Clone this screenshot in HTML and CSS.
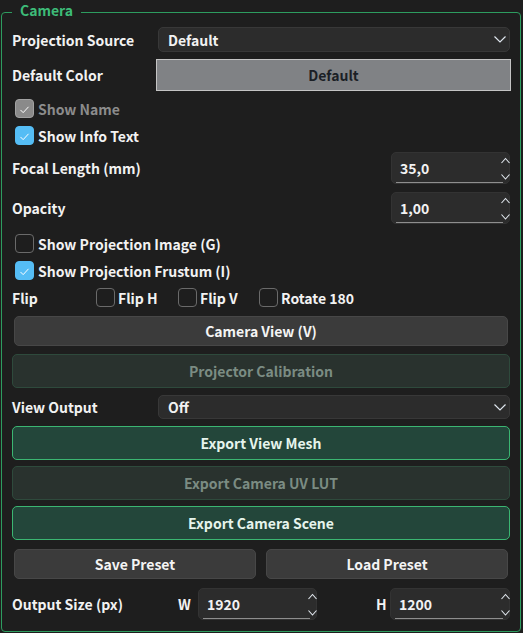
FILE: index.html
```html
<!DOCTYPE html>
<html lang="en">
<head>
  <meta charset="UTF-8" />
  <meta name="viewport" content="width=device-width, initial-scale=1.0" />
  <title>Camera</title>
  <link rel="stylesheet" href="styles.css">
</head>
<body>
  <fieldset class="group">
    <legend>Camera</legend>

    <div class="row combo-row">
      <span class="label">Projection Source</span>
      <div class="combo">
        <span>Default</span>
        <svg width="12" height="7" viewBox="0 0 12 7"><path d="M0.5 0.5 L6 6 L11.5 0.5" fill="none" stroke="#dfe6ee" stroke-width="1.2"/></svg>
      </div>
    </div>

    <div class="row color-row">
      <span class="label">Default Color</span>
      <button class="color-btn">Default</button>
    </div>

    <label class="check disabled checked first">
      <span class="box"><svg width="19" height="19" viewBox="0 0 19 19"><path d="M5 10 L8 13 L14 6.5" fill="none" stroke="#fff" stroke-width="1.1"/></svg></span>
      Show Name
    </label>
    <label class="check checked">
      <span class="box"><svg width="19" height="19" viewBox="0 0 19 19"><path d="M5 10 L8 13 L14 6.5" fill="none" stroke="#fff" stroke-width="1.1"/></svg></span>
      Show Info Text
    </label>

    <div class="row spin-row focal">
      <span class="label">Focal Length (mm)</span>
      <div class="spin">
        <span>35,0</span>
        <svg width="9" height="32" viewBox="0 0 9 32"><path d="M0.5 11 L4.5 6.5 L8.5 11 M0.5 22.5 L4.5 27 L8.5 22.5" fill="none" stroke="#e2e8ef" stroke-width="1.1"/></svg>
      </div>
    </div>

    <div class="row spin-row opacity">
      <span class="label">Opacity</span>
      <div class="spin">
        <span>1,00</span>
        <svg width="9" height="32" viewBox="0 0 9 32"><path d="M0.5 11 L4.5 6.5 L8.5 11 M0.5 22.5 L4.5 27 L8.5 22.5" fill="none" stroke="#e2e8ef" stroke-width="1.1"/></svg>
      </div>
    </div>

    <label class="check gap-top">
      <span class="box"></span>
      Show Projection Image (G)
    </label>
    <label class="check checked">
      <span class="box"><svg width="19" height="19" viewBox="0 0 19 19"><path d="M5 10 L8 13 L14 6.5" fill="none" stroke="#fff" stroke-width="1.1"/></svg></span>
      Show Projection Frustum (I)
    </label>

    <div class="row flip-row">
      <span class="label">Flip</span>
      <label class="check inline"><span class="box"></span>Flip H</label>
      <label class="check inline"><span class="box"></span>Flip V</label>
      <label class="check inline"><span class="box"></span>Rotate 180</label>
    </div>

    <button class="btn plain camera-view">Camera View (V)</button>
    <button class="btn disabled-btn calib">Projector Calibration</button>

    <div class="row combo-row view-output">
      <span class="label">View Output</span>
      <div class="combo small">
        <span>Off</span>
        <svg width="12" height="7" viewBox="0 0 12 7"><path d="M0.5 0.5 L6 6 L11.5 0.5" fill="none" stroke="#dfe6ee" stroke-width="1.2"/></svg>
      </div>
    </div>

    <button class="btn green export-mesh">Export View Mesh</button>
    <button class="btn disabled-btn export-lut">Export Camera UV LUT</button>
    <button class="btn green export-scene">Export Camera Scene</button>

    <div class="presets">
      <button class="btn plain">Save Preset</button>
      <button class="btn plain">Load Preset</button>
    </div>

    <div class="row size-row">
      <span class="label">Output Size (px)</span>
      <span class="label axis">W</span>
      <div class="spin">
        <span>1920</span>
        <svg width="9" height="32" viewBox="0 0 9 32"><path d="M0.5 11 L4.5 6.5 L8.5 11 M0.5 22.5 L4.5 27 L8.5 22.5" fill="none" stroke="#e2e8ef" stroke-width="1.1"/></svg>
      </div>
      <span></span>
      <span class="label axis">H</span>
      <div class="spin">
        <span>1200</span>
        <svg width="9" height="32" viewBox="0 0 9 32"><path d="M0.5 11 L4.5 6.5 L8.5 11 M0.5 22.5 L4.5 27 L8.5 22.5" fill="none" stroke="#e2e8ef" stroke-width="1.1"/></svg>
      </div>
    </div>
  </fieldset>
</body>
</html>
```

FILE: styles.css
```css
* { box-sizing: border-box; }
body { margin: 0; padding: 2px 2px 0 1px; background: #1e1e1e; color: #f2f2f2; font-family: "Noto Sans CJK KR", "Noto Sans", sans-serif; font-size: 14px; font-weight: 700; }

.group { margin: 0; width: 520px; height: 630px; border: 1px solid #2d9c5f; border-radius: 4px; padding: 5px 10px 0 10px; display: flex; flex-direction: column; }
.group legend { margin-left: 0; padding: 0 8px 4px 8px; color: #3dbb78; line-height: 16px; font-size: 14px; }

.row { display: flex; align-items: center; }
.label { white-space: nowrap; line-height: 20px; }

.combo-row { height: 25px; }
.combo-row .label { width: 146px; flex: none; }
.combo { flex: 1; height: 25px; display: flex; align-items: center; justify-content: space-between; padding: 0 3px 0 9px; background: #2c2c2c; border: 1px solid #383838; border-radius: 5px; }
.combo.small { height: 24px; }

.color-row { margin-top: 7px; height: 32px; }
.color-row .label { width: 144px; flex: none; }
.color-btn { flex: 1; height: 32px; margin-right: -1px; background: #808285; border: 1px solid #c4c4c4; color: #1b1f26; font: inherit; padding: 0; }

.check { display: flex; align-items: center; height: 27px; padding-left: 3px; gap: 4px; white-space: nowrap; }
.check.first { margin-top: 4px; }
.check.gap-top { margin-top: 6px; }
.check .box { width: 19px; height: 19px; flex: none; border: 1px solid #6a6a6a; border-radius: 4px; display: flex; }
.check.checked .box { background: #55bdf5; border-color: #55bdf5; }
.check.disabled { color: #8c8c8c; }
.check.disabled .box { background: #8a8a8a; border-color: #a2a2a2; }
.check.inline { padding-left: 0; gap: 3px; }

.spin-row { justify-content: space-between; }
.spin-row.focal { margin-top: 3px; }
.spin-row.opacity { margin-top: 8px; }
.spin { width: 119px; height: 32px; display: flex; align-items: center; justify-content: space-between; padding-left: 8px; background: linear-gradient(#8e8e8e, #8e8e8e) no-repeat 4px 100% / calc(100% - 10px) 1px, #2c2c2c; border: 1px solid #333; border-radius: 5px; }
.spin svg { flex: none; margin-right: -1px; }

.flip-row { display: grid; grid-template-columns: 84px 82px 81px auto; height: 27px; }

.btn { display: block; width: 100%; font: inherit; padding: 0; border-radius: 5px; }
.btn.plain { background: #3b3b3b; border: 1px solid #474747; color: #f4f4f4; height: 30px; }
.btn.disabled-btn { height: 34px; background: #29322e; border: 1px solid #2e4a3c; color: #7b8c83; }
.btn.green { height: 34px; background: #23463a; border: 1px solid #3bb672; color: #e6f4ec; }
.camera-view { margin: 5px 2px 0 2px; width: auto !important; }
.calib { margin-top: 8px; }
.view-output { margin-top: 7px; height: 24px; }
.export-mesh { margin-top: 7px; }
.export-lut { margin-top: 6px; }
.export-scene { margin-top: 6px; }

.presets { display: grid; grid-template-columns: 1fr 1fr; gap: 10px; margin: 9px 2px 0 2px; }

.size-row { display: grid; grid-template-columns: 166px 20px 119px 1fr 14px 120px; margin-top: 9px; height: 32px; }
.size-row .spin { width: auto; }
```
